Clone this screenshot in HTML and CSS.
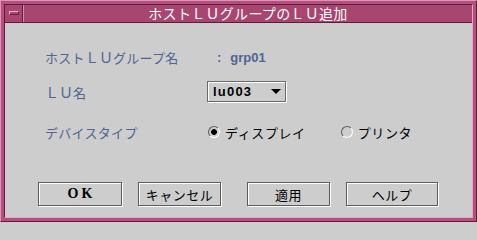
FILE: index.html
```html
<!DOCTYPE html>
<html lang="ja">
<head>
<meta charset="utf-8">
<title>ホストＬＵグループのＬＵ追加</title>
<link rel="stylesheet" href="styles.css">
</head>
<body>
<div class="window">
  <div class="inner">
    <div class="titlebar">
      <div class="menu-btn"><span class="menu-bar"></span></div>
      <div class="title">ホストＬＵグループのＬＵ追加</div>
    </div>
    <div class="content">
      <div class="row row1">
        <div class="label">ホスト<span class="lu">ＬＵ</span>グループ名</div>
        <div class="value"><span class="colon">:</span><span class="grp">grp01</span></div>
      </div>
      <div class="row row2">
        <div class="label"><span class="lu">ＬＵ</span>名</div>
        <div class="value">
          <div class="select"><span class="sel-text">lu003</span><span class="arrow"></span></div>
        </div>
      </div>
      <div class="row row3">
        <div class="label">デバイスタイプ</div>
        <div class="value">
          <span class="radio checked"></span><span class="opt opt1">ディスプレイ</span>
          <span class="radio"></span><span class="opt">プリンタ</span>
        </div>
      </div>
      <div class="buttons">
        <div class="btn btn-ok">OK</div>
        <div class="btn btn-cancel">キャンセル</div>
        <div class="btn btn-apply">適用</div>
        <div class="btn btn-help">ヘルプ</div>
      </div>
    </div>
  </div>
</div>
</body>
</html>
```

FILE: styles.css
```css
* { box-sizing: border-box; }
html, body { margin: 0; padding: 0; background: #cdcdcd; }
body { width: 477px; height: 222px; overflow: hidden; font-family: "Noto Sans CJK JP", "Liberation Sans", sans-serif; }

.window {
  width: 477px;
  height: 222px;
  background: #b4507e;
  border: 1px solid;
  border-color: #dc97b8 #5e1c3c #5e1c3c #dc97b8;
  padding: 3px;
}
.inner {
  height: 100%;
  border: 1px solid;
  border-color: #5e1c3c #e4a8c4 #e4a8c4 #5e1c3c;
  background: #cdcdcd;
  display: flex;
  flex-direction: column;
}
.titlebar {
  height: 18px;
  display: flex;
  background: #a9466f;
  border-bottom: 1px solid #5e1c3c;
}
.menu-btn {
  width: 18px;
  border-right: 1px solid #5e1c3c;
  display: flex;
  align-items: center;
  justify-content: center;
}
.menu-bar {
  width: 10px;
  height: 4px;
  border: 1px solid;
  border-color: #e8b0ca #6a2244 #6a2244 #e8b0ca;
  margin-top: -1px;
}
.title {
  flex: 1;
  border-left: 1px solid #d68cae;
  color: #ffffff;
  font-size: 14px;
  line-height: 17px;
  text-align: center;
  letter-spacing: 0.3px;
}
.content {
  flex: 1;
  padding-top: 23px;
}
.row {
  display: flex;
  align-items: center;
  height: 22px;
}
.row2 { margin-top: 13px; height: 21px; }
.row3 { margin-top: 19px; }
.label {
  width: 203px;
  padding-left: 40px;
  color: #4e6592;
  font-size: 13px;
  letter-spacing: 0.3px;
  white-space: nowrap;
}
.lu { font-size: 14px; letter-spacing: 0; }
.value {
  display: flex;
  align-items: center;
  height: 100%;
}
.colon {
  margin-left: 9px;
  color: #4e6592;
  font-family: "Liberation Sans", sans-serif;
  font-weight: bold;
  font-size: 13px;
}
.grp {
  margin-left: 9px;
  color: #4e6592;
  font-family: "Liberation Sans", sans-serif;
  font-weight: bold;
  font-size: 13px;
}
.select {
  width: 79px;
  height: 21px;
  margin-left: -1px;
  border: 1px solid #6a6a6a;
  box-shadow: 1px 1px 0 #ffffff, inset 1px 1px 0 #ffffff;
  display: flex;
  align-items: center;
  justify-content: space-between;
  padding: 0 4px 0 5px;
}
.sel-text {
  font-family: "Liberation Sans", sans-serif;
  font-weight: bold;
  font-size: 13px;
  letter-spacing: 1.2px;
  color: #000;
}
.arrow {
  width: 0;
  height: 0;
  border-left: 5px solid transparent;
  border-right: 5px solid transparent;
  border-top: 5px solid #000;
}
.radio {
  width: 12px;
  height: 12px;
  border-radius: 50%;
  border: 1px solid;
  border-color: #5a5a5a #ffffff #ffffff #5a5a5a;
  background: #cdcdcd;
  flex: none;
}
.radio.checked {
  background: radial-gradient(circle, #000 0 2.6px, #cdcdcd 3.2px);
}
.opt {
  margin-left: 5px;
  font-size: 13px;
  letter-spacing: 0.6px;
  color: #000;
}
.opt1 { margin-right: 35px; }
.buttons {
  display: flex;
  margin-top: 39px;
  padding-left: 33px;
}
.btn {
  height: 24px;
  border: 1px solid #5c5c5c;
  box-shadow: 1px 1px 0 #ffffff, inset 1px 1px 0 #ffffff;
  display: flex;
  align-items: center;
  justify-content: center;
  font-size: 13px;
  color: #000;
  letter-spacing: 0.5px;
}
.btn-ok {
  width: 84px;
  font-family: "Liberation Serif", serif;
  font-weight: bold;
  font-size: 14px;
  letter-spacing: 3px;
  padding-left: 3px;
}
.btn-cancel { width: 83px; margin-left: 16px; }
.btn-apply { width: 83px; margin-left: 26px; }
.btn-help { width: 92px; margin-left: 16px; }
```
